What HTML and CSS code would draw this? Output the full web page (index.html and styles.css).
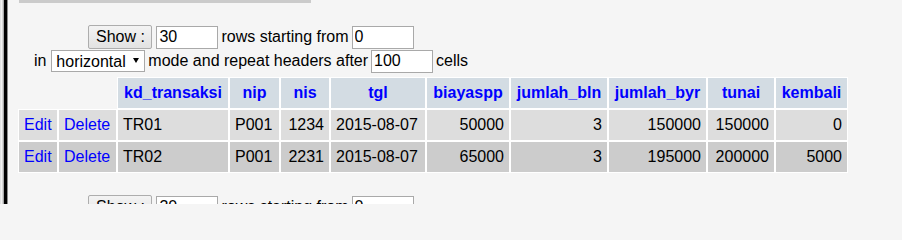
FILE: index.html
```html
<!DOCTYPE html>
<html>
<head>
<meta charset="utf-8">
<title>Browse</title>
<link rel="stylesheet" href="styles.css">
</head>
<body>
<div class="page">
  <div class="edge"></div>
  <div class="main">
    <div class="top-strip"></div>

    <form class="nav-form">
      <div class="line">
        <button type="button" class="btn">Show :</button>
        <input class="num" type="text" value="30">
        <span>rows starting from</span>
        <input class="num" type="text" value="0">
      </div>
      <div class="line">
        <span>in</span>
        <span class="select-wrap"><select class="select"><option>horizontal</option><option>vertical</option></select></span>
        <span>mode and repeat headers after</span>
        <input class="num" type="text" value="100">
        <span>cells</span>
      </div>
    </form>

    <table class="data">
      <thead>
        <tr>
          <th class="blank" colspan="2"></th>
          <th class="c-kd"><a href="#">kd_transaksi</a></th>
          <th class="c-nip"><a href="#">nip</a></th>
          <th class="c-nis"><a href="#">nis</a></th>
          <th class="c-tgl"><a href="#">tgl</a></th>
          <th class="c-biaya"><a href="#">biayaspp</a></th>
          <th class="c-bln"><a href="#">jumlah_bln</a></th>
          <th class="c-byr"><a href="#">jumlah_byr</a></th>
          <th class="c-tunai"><a href="#">tunai</a></th>
          <th class="c-kembali"><a href="#">kembali</a></th>
        </tr>
      </thead>
      <tbody>
        <tr class="odd">
          <td class="c-edit"><a href="#">Edit</a></td>
          <td class="c-delete"><a href="#">Delete</a></td>
          <td>TR01</td>
          <td>P001</td>
          <td class="right">1234</td>
          <td>2015-08-07</td>
          <td class="right">50000</td>
          <td class="right">3</td>
          <td class="right">150000</td>
          <td class="right">150000</td>
          <td class="right">0</td>
        </tr>
        <tr class="even">
          <td class="c-edit"><a href="#">Edit</a></td>
          <td class="c-delete"><a href="#">Delete</a></td>
          <td>TR02</td>
          <td>P001</td>
          <td class="right">2231</td>
          <td>2015-08-07</td>
          <td class="right">65000</td>
          <td class="right">3</td>
          <td class="right">195000</td>
          <td class="right">200000</td>
          <td class="right">5000</td>
        </tr>
      </tbody>
    </table>

    <form class="nav-form">
      <div class="line">
        <button type="button" class="btn">Show :</button>
        <input class="num" type="text" value="30">
        <span>rows starting from</span>
        <input class="num" type="text" value="0">
      </div>
    </form>
  </div>
</div>
</body>
</html>
```

FILE: styles.css
```css
* { box-sizing: border-box; }

html, body {
  margin: 0;
  background: #f5f5f5;
}

html, body {
  height: 204px;
  overflow: hidden;
}

body {
  font-family: "Liberation Sans", Arial, sans-serif;
  font-size: 16px;
  color: #000;
}

.page {
  display: flex;
  height: 204px;
  overflow: hidden;
}

.edge {
  flex: none;
  width: 8px;
  background: linear-gradient(to right,
    #e2e2e2 0 1px, #f2f2f2 1px 2px, #d6d6d6 2px 3px, #a8a8a8 3px 4px,
    #000 4px 7px, #8c8c8c 7px 8px);
}

.main {
  flex: 1;
  padding-left: 10px;
}

.top-strip {
  margin-left: 1px;
  width: 292px;
  height: 3px;
  background: #cbcbcb;
}

.nav-form {
  margin: 22px 0 0 0;
  width: 466px;
}

.line {
  display: flex;
  justify-content: center;
  align-items: center;
  gap: 3px;
  height: 24px;
  white-space: nowrap;
}

.btn {
  font: inherit;
  width: 64px;
  height: 24px;
  padding: 0;
  margin-right: 1px;
  border: 1px solid #adadad;
  border-radius: 2px;
  background: linear-gradient(#f3f3f3, #e2e2e2);
  color: #000;
}

.num {
  font: inherit;
  width: 62px;
  height: 23px;
  padding: 0 2px;
  border: 1px solid #a9a9a9;
  background: #fff;
  color: #000;
}

.select-wrap {
  position: relative;
  display: inline-block;
  height: 22px;
  margin-left: 2px;
}

.select {
  font: inherit;
  -webkit-appearance: none;
  appearance: none;
  width: 94px;
  height: 22px;
  padding: 0 0 0 4px;
  border: 1px solid #a9a9a9;
  border-radius: 0;
  background: #fff;
  color: #000;
}

.select-wrap::after {
  content: "";
  position: absolute;
  right: 6px;
  top: 8px;
  width: 0;
  height: 0;
  border-left: 3.5px solid transparent;
  border-right: 3.5px solid transparent;
  border-top: 5px solid #000;
  pointer-events: none;
}

.data {
  margin-top: 4px;
  border-collapse: separate;
  border-spacing: 0;
}

.data th,
.data td {
  border: 1px solid #fff;
  padding: 6px 5px;
  line-height: 18px;
  white-space: nowrap;
}

.data th {
  background: #d3dce3;
  font-weight: bold;
  text-align: center;
}

.data th.blank {
  background: transparent;
  border-color: transparent;
}

.data tr.odd td { background: #dddddd; }
.data tr.even td { background: #cccccc; }

.data td { text-align: left; }
.data td.right { text-align: right; }

.data a {
  color: #0000ff;
  text-decoration: none;
}

.c-edit { width: 40px; }
.c-delete { width: 59px; }
.c-kd { width: 112px; }
.c-nip { width: 51px; }
.c-nis { width: 50px; }
.c-tgl { width: 96px; }
.c-biaya { width: 84px; }
.c-bln { width: 98px; }
.c-byr { width: 99px; }
.c-tunai { width: 68px; }
.c-kembali { width: 73px; }
```
